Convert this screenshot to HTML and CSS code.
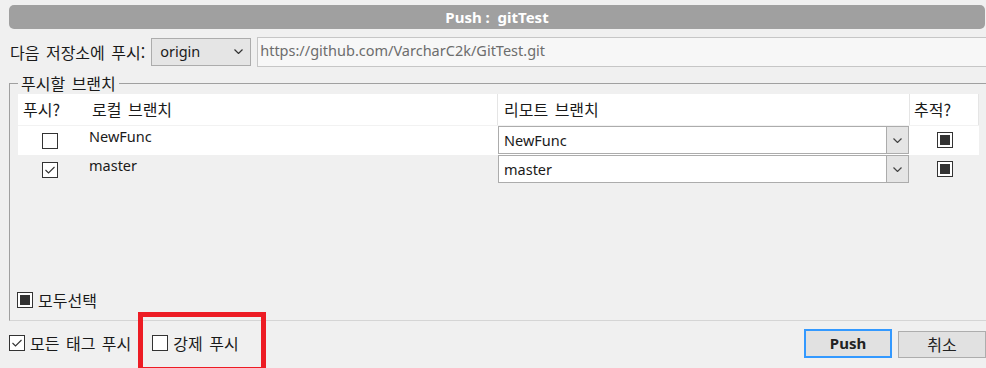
FILE: index.html
```html
<!DOCTYPE html>
<html lang="ko">
<head>
<meta charset="utf-8">
<title>Push : gitTest</title>
<link rel="stylesheet" href="styles.css">
</head>
<body>
<div class="dialog">
  <div class="titlebar">Push :&nbsp; gitTest</div>

  <div class="remote-row">
    <span class="label ko">다음 저장소에 푸시:</span>
    <div class="combo origin">
      <span class="combo-text">origin</span>
      <svg class="chev" width="9" height="5" viewBox="0 0 9 5"><polyline points="0.5,0.5 4.5,4.5 8.5,0.5" fill="none" stroke="#333" stroke-width="1.2"/></svg>
    </div>
    <div class="url">https://github.com/VarcharC2k/GitTest.git</div>
  </div>

  <fieldset class="group">
    <legend class="ko">푸시할 브랜치</legend>
    <div class="list">
      <div class="row head">
        <div class="cell c1 ko">푸시?</div>
        <div class="cell c2 ko">로컬 브랜치</div>
        <div class="cell c3 ko">리모트 브랜치</div>
        <div class="cell c4 ko">추적?</div>
      </div>
      <div class="row item white">
        <div class="cell c1 center"><span class="cb"></span></div>
        <div class="cell c2 name">NewFunc</div>
        <div class="cell c3">
          <div class="combo remote">
            <span class="combo-text">NewFunc</span>
            <span class="drop"><svg width="9" height="5" viewBox="0 0 9 5"><polyline points="0.5,0.5 4.5,4.5 8.5,0.5" fill="none" stroke="#444" stroke-width="1.2"/></svg></span>
          </div>
        </div>
        <div class="cell c4 center"><span class="cb mixed"></span></div>
      </div>
      <div class="row item">
        <div class="cell c1 center"><span class="cb"><svg width="14" height="14" viewBox="0 0 14 14"><polyline points="2.5,7 5.5,10 11.5,4" fill="none" stroke="#333" stroke-width="1.1"/></svg></span></div>
        <div class="cell c2 name">master</div>
        <div class="cell c3">
          <div class="combo remote">
            <span class="combo-text">master</span>
            <span class="drop"><svg width="9" height="5" viewBox="0 0 9 5"><polyline points="0.5,0.5 4.5,4.5 8.5,0.5" fill="none" stroke="#444" stroke-width="1.2"/></svg></span>
          </div>
        </div>
        <div class="cell c4 center"><span class="cb mixed"></span></div>
      </div>
    </div>
    <label class="check select-all"><span class="cb mixed"></span><span class="ko">모두선택</span></label>
  </fieldset>

  <div class="footer">
    <label class="check"><span class="cb"><svg width="14" height="14" viewBox="0 0 14 14"><polyline points="2.5,7 5.5,10 11.5,4" fill="none" stroke="#333" stroke-width="1.1"/></svg></span><span class="ko">모든 태그 푸시</span></label>
    <label class="check force"><span class="cb"></span><span class="ko">강제 푸시</span><span class="highlight"></span></label>
    <div class="buttons">
      <button class="btn primary">Push</button>
      <button class="btn ko">취소</button>
    </div>
  </div>
</div>
</body>
</html>
```

FILE: styles.css
```css
html, body {
  margin: 0;
  padding: 0;
  width: 986px;
  height: 368px;
  overflow: hidden;
  background: #f0f0f0;
}

body {
  font-family: "Noto Sans", "Noto Sans CJK KR", sans-serif;
  font-size: 14.5px;
  color: #1a1a1a;
}

.ko {
  font-family: "Noto Sans CJK KR", sans-serif;
  font-size: 16px;
  word-spacing: 2px;
}

.dialog {
  display: flex;
  flex-direction: column;
}

.titlebar {
  margin: 5px 1px 0 9px;
  height: 24px;
  line-height: 24px;
  background: #a0a0a0;
  border-radius: 5px;
  color: #fff;
  font-weight: bold;
  font-size: 15px;
  text-align: center;
}

.remote-row {
  display: flex;
  align-items: center;
  margin-top: 8px;
  padding-left: 10px;
  height: 29px;
}

.label {
  white-space: nowrap;
  margin-right: 6px;
}

.combo {
  display: flex;
  align-items: center;
  box-sizing: border-box;
}

.combo.origin {
  width: 100px;
  height: 28px;
  background: #e5e5e5;
  border: 1px solid #acacac;
  padding: 0 7px 0 8px;
  justify-content: space-between;
}

.combo-text {
  line-height: 1;
}

.url {
  flex: 1;
  margin-left: 6px;
  height: 30px;
  box-sizing: border-box;
  border: 1px solid #c6c6c6;
  border-right: none;
  background: #f7f7f7;
  color: #6d6d6d;
  padding-left: 2px;
  line-height: 24px;
  white-space: nowrap;
}

.group {
  margin: 7px 0 0 9px;
  padding: 0 0 10px 8px;
  border: 1px solid #a0a0a0;
  border-right: none;
  border-bottom-color: #d5d5d5;
  min-width: 0;
}

.group legend {
  margin-left: 0;
  padding: 0 3px 0 3px;
  line-height: 20px;
}

.list {
  width: 961px;
  height: 196px;
  margin-top: 1px;
}

.row {
  display: grid;
  grid-template-columns: 64px 415px 412px 70px;
}

.row.head {
  height: 31px;
  background: #fff;
  border-bottom: 1px solid #f2f2f2;
}

.row.head .cell {
  line-height: 31px;
}

.row.head .c3 {
  border-left: 1px solid #e5e5e5;
  padding-left: 6px;
}

.row.head .c4 {
  border-left: 1px solid #e5e5e5;
  border-right: 1px solid #e5e5e5;
  padding-left: 4px;
}

.row.head .c1 { padding-left: 5px; }
.row.head .c2 { padding-left: 10px; }

.row.item {
  height: 29px;
}

.row.white {
  background: #fff;
}

.cell {
  box-sizing: border-box;
  white-space: nowrap;
}

.cell.center {
  display: flex;
  align-items: center;
  justify-content: center;
}

.cell.name {
  padding-left: 7px;
  line-height: 20px;
}

.combo.remote {
  margin-left: 1px;
  height: 28px;
  background: #fff;
  border: 1px solid #acacac;
}

.combo.remote .combo-text {
  flex: 1;
  padding-left: 5px;
}

.drop {
  width: 22px;
  height: 100%;
  box-sizing: border-box;
  background: #e5e5e5;
  border-left: 1px solid #acacac;
  display: flex;
  align-items: center;
  justify-content: center;
}

.cb {
  width: 16px;
  height: 16px;
  box-sizing: border-box;
  border: 1px solid #333;
  background: #fff;
  display: inline-flex;
  align-items: center;
  justify-content: center;
  flex: none;
}

.cb.mixed::after {
  content: "";
  width: 10px;
  height: 10px;
  background: #333;
}

.row.item .c4 .cb {
  margin-left: 2px;
  margin-top: -2px;
}

.check {
  display: flex;
  align-items: center;
  gap: 5px;
}

.select-all {
  margin-left: -1px;
  height: 20px;
}

.footer {
  display: flex;
  align-items: center;
  height: 44px;
  padding-left: 9px;
}

.force {
  position: relative;
  margin-left: 21px;
}

.highlight {
  position: absolute;
  left: -14px;
  top: -19px;
  width: 128px;
  height: 60px;
  box-sizing: border-box;
  border: 5px solid #ed1c24;
}

.buttons {
  margin-left: auto;
  display: flex;
  align-items: flex-end;
  gap: 6px;
}

.btn {
  font-family: "Noto Sans", sans-serif;
  font-size: 15px;
  color: #222;
  background: #e1e1e1;
  border: 1px solid #adadad;
  width: 88px;
  height: 27px;
  padding: 0;
  margin: 0;
}

.btn.ko {
  font-family: "Noto Sans CJK KR", sans-serif;
  font-size: 16px;
}

.btn.primary {
  border: 2px solid #3399ff;
  height: 29px;
  font-weight: bold;
}
```
